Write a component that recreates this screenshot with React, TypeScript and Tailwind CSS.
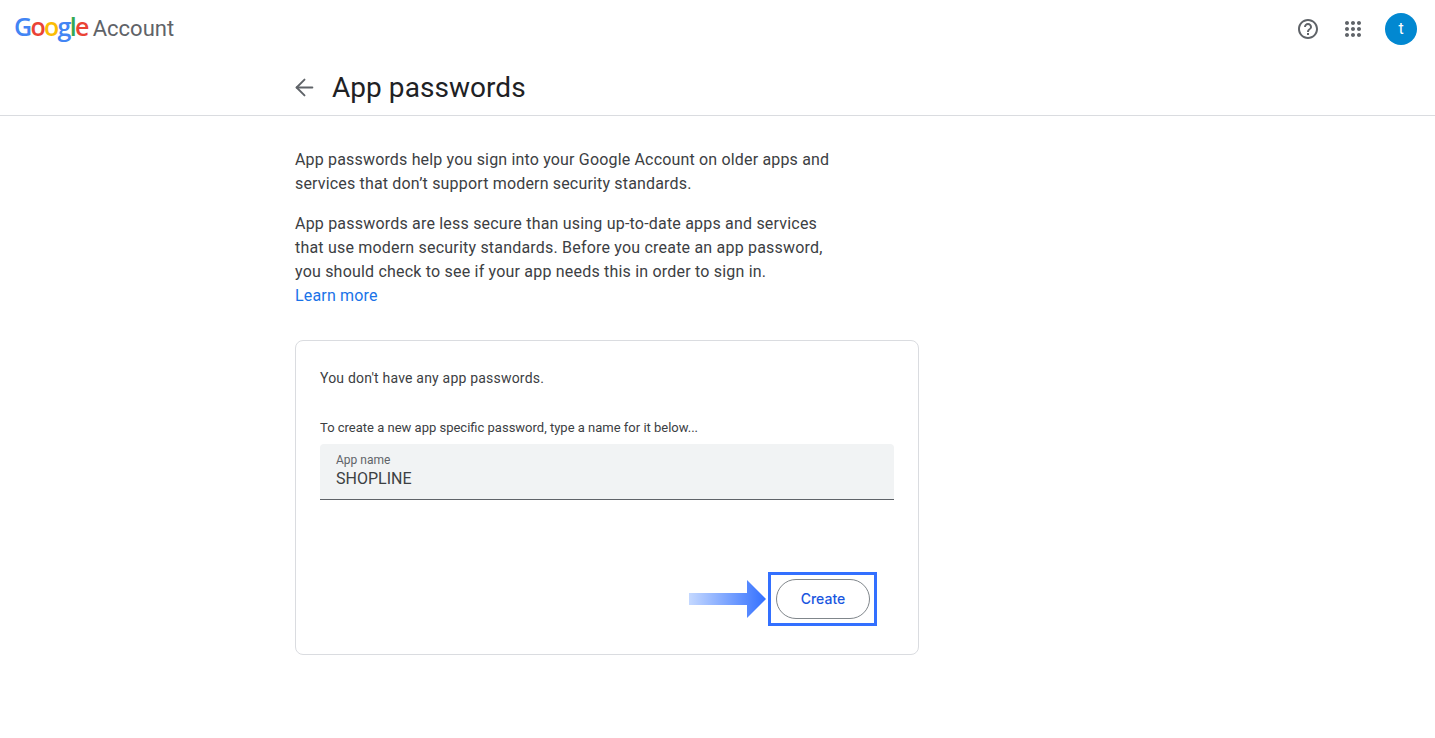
import { ArrowLeft } from 'lucide-react'

const logo = [
	['G', 'text-[#4285f4]'],
	['o', 'text-[#ea4335]'],
	['o', 'text-[#fbbc05]'],
	['g', 'text-[#4285f4]'],
	['l', 'text-[#34a853]'],
	['e', 'text-[#ea4335]'],
]

export default function App() {
	return (
		<div className="min-h-[738px] bg-white font-['Roboto',sans-serif] text-[#3c4043]">

			{/* Шапка */}
			<header className="flex h-[57px] items-center justify-between pl-[14px] pr-[18px]">
				<div className="mb-[3px] flex items-baseline gap-[5px] leading-none">
					<span className="font-['Open_Sans',sans-serif] text-[25px] font-semibold tracking-[-1.7px]">
						{logo.map(([letter, color], i) => (
							<span key={i} className={color}>{letter}</span>
						))}
					</span>
					<span className="text-[22px] text-[#5f6368]">Account</span>
				</div>
				<div className="flex items-center">
					<svg width="24" height="24" viewBox="0 0 24 24" fill="#5f6368" className="mr-[21px]">
						<path d="M11 18h2v-2h-2v2zm1-16C6.48 2 2 6.48 2 12s4.48 10 10 10 10-4.48 10-10S17.52 2 12 2zm0 18c-4.41 0-8-3.59-8-8s3.59-8 8-8 8 3.59 8 8-3.59 8-8 8zm0-14c-2.21 0-4 1.79-4 4h2c0-1.1.9-2 2-2s2 .9 2 2c0 2-3 1.75-3 5h2c0-2.25 3-2.5 3-5 0-2.21-1.79-4-4-4z" />
					</svg>
					<svg width="24" height="24" viewBox="0 0 24 24" fill="#5f6368" className="mr-[20px]">
						<path d="M6 8c1.1 0 2-.9 2-2s-.9-2-2-2-2 .9-2 2 .9 2 2 2zm6 12c1.1 0 2-.9 2-2s-.9-2-2-2-2 .9-2 2 .9 2 2 2zm-6 0c1.1 0 2-.9 2-2s-.9-2-2-2-2 .9-2 2 .9 2 2 2zm0-6c1.1 0 2-.9 2-2s-.9-2-2-2-2 .9-2 2 .9 2 2 2zm6 0c1.1 0 2-.9 2-2s-.9-2-2-2-2 .9-2 2 .9 2 2 2zm4-8c0 1.1.9 2 2 2s2-.9 2-2-.9-2-2-2-2 .9-2 2zm-4 2c1.1 0 2-.9 2-2s-.9-2-2-2-2 .9-2 2 .9 2 2 2zm6 6c1.1 0 2-.9 2-2s-.9-2-2-2-2 .9-2 2 .9 2 2 2zm0 6c1.1 0 2-.9 2-2s-.9-2-2-2-2 .9-2 2 .9 2 2 2z" />
					</svg>
					<div className="flex h-8 w-8 items-center justify-center rounded-full bg-[#0288d1] text-base text-white">
						t
					</div>
				</div>
			</header>

			{/* Заголовок */}
			<div className="flex h-[59px] items-center border-b border-[#dadce0] pl-[291px] pt-[3px]">
				<ArrowLeft size={27} strokeWidth={1.7} className="text-[#5f6368]" />
				<h1 className="ml-[14px] text-[28px] leading-9 tracking-[0.05px] text-[#202124]">App passwords</h1>
			</div>

			<main className="ml-[295px] w-[624px] pt-[32px]">
				<p className="w-[545px] text-base leading-6 tracking-[0.17px]">
					App passwords help you sign into your Google Account on older apps and services that don’t support modern security standards.
				</p>
				<p className="mt-4 w-[545px] text-base leading-6 tracking-[0.2px]">
					App passwords are less secure than using up-to-date apps and services that use modern security standards. Before you create an app password, you should check to see if your app needs this in order to sign in.
					<a className="block tracking-[0.17px] text-[#1a73e8]">Learn more</a>
				</p>

				{/* Карточка */}
				<div className="mt-[32px] h-[315px] rounded-lg border border-[#dadce0] px-6 pt-[27px]">
					<p className="text-[14px] leading-5 tracking-[0.2px]">You don't have any app passwords.</p>
					<p className="mt-[30px] text-[13px] leading-5">To create a new app specific password, type a name for it below...</p>
					<div className="mt-[6px] h-14 rounded-t border-b border-[#5f6368] bg-[#f1f3f4] px-4 pt-[8px]">
						<div className="text-[12px] leading-4 text-[#5f6368]">App name</div>
						<div className="text-base leading-[22px] text-[#3c4043]">SHOPLINE</div>
					</div>
					<div className="relative mt-[79px] flex justify-end pr-6">
						<button className="h-10 w-[94px] rounded-full border border-[#80868b] bg-white font-['Inter',sans-serif] text-sm font-medium text-[#1a56e0]">
							Create
						</button>

						{/* Выделение кнопки */}
						<div className="absolute right-[17px] top-[-7px] h-[54px] w-[109px] border-[3px] border-[#3370ff]" />
						<svg width="77" height="38" viewBox="0 0 77 38" className="absolute left-[369px] top-[1px]">
							<defs>
								<linearGradient id="arrowFill" x1="0" y1="0" x2="1" y2="0">
									<stop offset="0" stopColor="#c4d8ff" />
									<stop offset="1" stopColor="#3370ff" />
								</linearGradient>
							</defs>
							<path d="M0 13H58V0L77 19L58 38V25H0Z" fill="url(#arrowFill)" />
						</svg>
					</div>
				</div>
			</main>
		</div>
	)
}
